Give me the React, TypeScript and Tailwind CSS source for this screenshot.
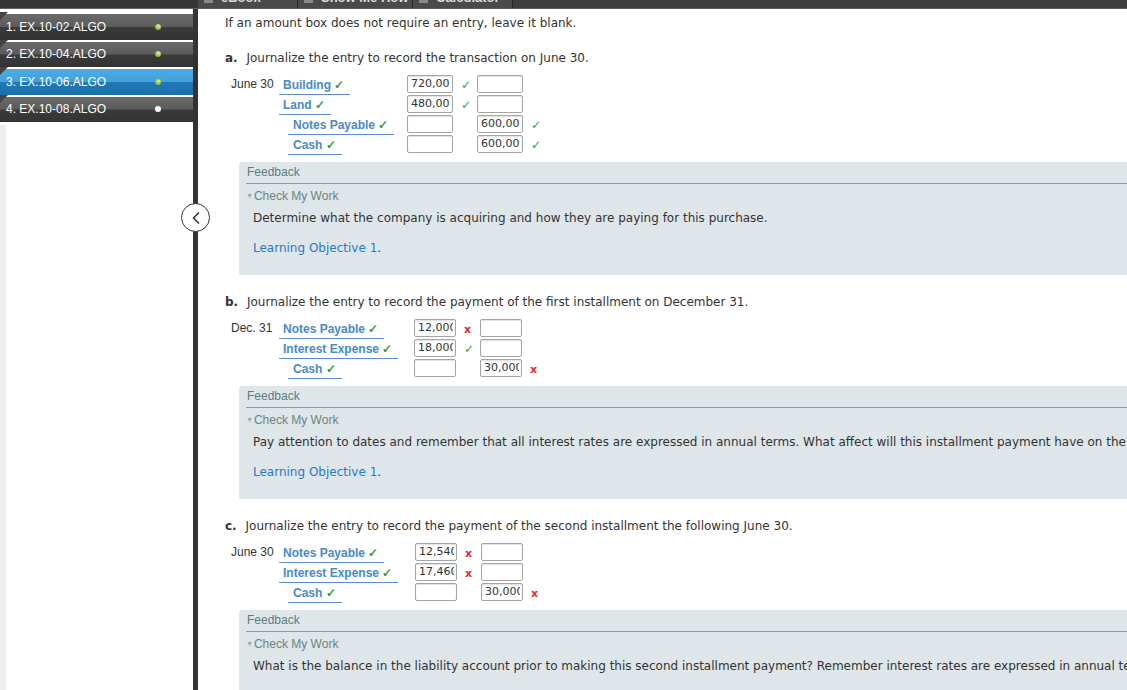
import React from "react";

type Mark = "ok" | "x" | undefined;

type Line = {
  label: string;
  indent?: boolean;
  debit?: string;
  dMark?: Mark;
  credit?: string;
  cMark?: Mark;
};

type Entry = {
  key: string;
  letter: string;
  title: string;
  date: string;
  labelCol: string;
  dWidth: string;
  cWidth: string;
  clip: string;
  lines: Line[];
  hint: string;
};

const ITEMS = [
  { name: "1. EX.10-02.ALGO", dot: "green", active: false },
  { name: "2. EX.10-04.ALGO", dot: "green", active: false },
  { name: "3. EX.10-06.ALGO", dot: "green", active: true },
  { name: "4. EX.10-08.ALGO", dot: "white", active: false },
];

const ENTRIES: Entry[] = [
  {
    key: "a",
    letter: "a.",
    title: "Journalize the entry to record the transaction on June 30.",
    date: "June 30",
    labelCol: "w-[128px]",
    dWidth: "w-[46px]",
    cWidth: "w-[46px]",
    clip: "w-[40px]",
    lines: [
      { label: "Building", debit: "720,00", dMark: "ok" },
      { label: "Land", debit: "480,00", dMark: "ok" },
      { label: "Notes Payable", indent: true, credit: "600,00", cMark: "ok" },
      { label: "Cash", indent: true, credit: "600,00", cMark: "ok" },
    ],
    hint: "Determine what the company is acquiring and how they are paying for this purchase.",
  },
  {
    key: "b",
    letter: "b.",
    title: "Journalize the entry to record the payment of the first installment on December 31.",
    date: "Dec. 31",
    labelCol: "w-[135px]",
    dWidth: "w-[42px]",
    cWidth: "w-[42px]",
    clip: "w-[35px]",
    lines: [
      { label: "Notes Payable", debit: "12,000", dMark: "x" },
      { label: "Interest Expense", debit: "18,000", dMark: "ok" },
      { label: "Cash", indent: true, credit: "30,000", cMark: "x" },
    ],
    hint: "Pay attention to dates and remember that all interest rates are expressed in annual terms. What affect will this installment payment have on the balance?",
  },
  {
    key: "c",
    letter: "c.",
    title: "Journalize the entry to record the payment of the second installment the following June 30.",
    date: "June 30",
    labelCol: "w-[136px]",
    dWidth: "w-[42px]",
    cWidth: "w-[42px]",
    clip: "w-[35px]",
    lines: [
      { label: "Notes Payable", debit: "12,540", dMark: "x" },
      { label: "Interest Expense", debit: "17,460", dMark: "x" },
      { label: "Cash", indent: true, credit: "30,000", cMark: "x" },
    ],
    hint: "What is the balance in the liability account prior to making this second installment payment? Remember interest rates are expressed in annual terms.",
  },
];

function Check({ m }: { m: Mark }) {
  if (m === "ok")
    return <span className="text-[12px] leading-none text-[#3d9a3d]">✓</span>;
  if (m === "x")
    return <span className="text-[11px] font-bold leading-none text-[#e52b2b]">x</span>;
  return null;
}

function AmountBox({ value, width, clip }: { value?: string; width: string; clip: string }) {
  return (
    <div
      className={`${width} h-[18px] shrink-0 rounded-[2px] border border-[#a4a4a4] bg-white pl-[3px] text-[11px] leading-[16px] text-[#333] shadow-[inset_0_1px_1px_rgba(0,0,0,0.12)]`}
    >
      <div className={`${clip} overflow-hidden whitespace-nowrap`}>{value}</div>
    </div>
  );
}

function Journal({ e }: { e: Entry }) {
  return (
    <div className="mt-[9px] flex flex-col gap-[2px]">
      {e.lines.map((l, i) => (
        <div key={l.label} className="flex h-[18px] items-center">
          <div className="w-[54px] shrink-0 pl-[6px] [font-family:'Liberation_Sans',Arial,sans-serif] text-[12px] text-[#333]">
            {i === 0 ? e.date : ""}
          </div>
          <div className={`${e.labelCol} shrink-0`}>
            <span
              className={`inline-block h-[18px] border-b border-[#5b8fc9] pr-[6px] [font-family:'Liberation_Sans',Arial,sans-serif] text-[12px] font-bold leading-[16px] text-[#4a89c8] ${
                l.indent ? "ml-[9px] pl-[5px]" : "pl-[4px]"
              }`}
            >
              {l.label} <Check m="ok" />
            </span>
          </div>
          <AmountBox value={l.debit} width={e.dWidth} clip={e.clip} />
          <div className="ml-[8px] w-[16px] shrink-0">
            <Check m={l.dMark} />
          </div>
          <AmountBox value={l.credit} width={e.cWidth} clip={e.clip} />
          <div className="ml-[8px] w-[16px] shrink-0">
            <Check m={l.cMark} />
          </div>
        </div>
      ))}
    </div>
  );
}

function Feedback({ hint }: { hint: string }) {
  return (
    <div className="ml-[14px] mt-[9px] h-[113px] w-[960px] rounded-[3px] bg-[#dfe6e9] pl-[7px]">
      <div className="border-b border-[#8e9b9d] pb-[4px] pl-[1px] pt-[3px] [font-family:'Liberation_Sans',Arial,sans-serif] text-[12px] leading-[14px] text-[#5d7d7c]">
        Feedback
      </div>
      <div className="mt-[5px] flex items-center [font-family:'Liberation_Sans',Arial,sans-serif] text-[12px] leading-[14px] text-[#688584]">
        <span className="mr-[1px] text-[7px] text-[#9aa6a8]">▼</span>
        Check My Work
      </div>
      <div className="mt-[7px] whitespace-nowrap pl-[7px] text-[12px] leading-[16px] text-[#333]">
        {hint}
      </div>
      <div className="mt-[14px] pl-[7px] text-[12px] leading-[16px] text-[#333]">
        <span className="text-[#2b78c5]">Learning Objective 1</span>.
      </div>
    </div>
  );
}

export default function App() {
  return (
    <div className="relative flex h-[690px] w-[1127px] flex-col overflow-hidden bg-white [font-family:'DejaVu_Sans',Verdana,sans-serif]">
      {/* toolbar, scrolled almost out of view */}
      <div className="flex h-[9px] shrink-0 overflow-hidden border-b border-[#5e5e5e] bg-[#3d3d3d] [font-family:'Liberation_Sans',Arial,sans-serif]">
        <div className="w-[198px] shrink-0 bg-[#353535]" />
        {["eBook", "Show Me How", "Calculator"].map((t, i) => (
          <div
            key={t}
            className={`flex h-[9px] shrink-0 items-start gap-[8px] border-r border-[#262626] bg-[#4a4a4a] pl-[6px] ${
              i === 0 ? "w-[100px]" : i === 1 ? "w-[115px]" : "w-[100px]"
            }`}
          >
            <span className="h-[3px] w-[9px] bg-[#8a8a8a]" />
            <span className="-mt-[9px] text-[13px] font-bold leading-[14px] text-[#dcdcdc]">{t}</span>
          </div>
        ))}
      </div>

      <div className="flex min-h-0 flex-1">
        {/* assignment list */}
        <div className="flex w-[193px] shrink-0 flex-col bg-white pt-[5px]">
          <div className="flex flex-col gap-[2px]">
            {ITEMS.map((it) => (
              <div
                key={it.name}
                className={`relative flex h-[25.5px] items-center pl-[6px] ${
                  it.active
                    ? "bg-[linear-gradient(#4eaae2_0%,#43a2db_48%,#2079b5_52%,#1b71aa_100%)]"
                    : "bg-[linear-gradient(#6a6a6a_0%,#5c5c5c_48%,#3b3b3b_52%,#333333_100%)]"
                }`}
              >
                <span className="absolute -top-[2px] left-0 h-0 w-0 border-l-[4px] border-t-[4px] border-b-[4px] border-r-[4px] border-l-[#444] border-t-[#444] border-b-transparent border-r-transparent" />
                <span className="w-[149px] [font-family:'Liberation_Sans',Arial,sans-serif] text-[12px] text-white">
                  {it.name}
                </span>
                <span
                  className={`h-[6px] w-[6px] rounded-full ${
                    it.dot === "green"
                      ? "bg-[radial-gradient(circle_at_60%_35%,#e6f3c6_0%,#9ccc4e_45%,#6f9d2d_100%)]"
                      : "bg-white"
                  }`}
                />
              </div>
            ))}
          </div>
          <div className="mt-[3px] flex-1 border-l-[6px] border-[#ececec]" />
        </div>

        {/* divider */}
        <div className="w-[5px] shrink-0 bg-[#333]" />

        {/* question content */}
        <div className="min-w-0 flex-1 pl-[27px] pt-[6px] text-[#333]">
          <div className="text-[12px] leading-[16px]">
            If an amount box does not require an entry, leave it blank.
          </div>
          {ENTRIES.map((e) => (
            <div key={e.key}>
              <div className="mt-[19px] whitespace-nowrap text-[12px] leading-[16px]">
                <span className="mr-[5px] font-bold">{e.letter}</span> {e.title}
              </div>
              <Journal e={e} />
              <Feedback hint={e.hint} />
            </div>
          ))}
        </div>
      </div>

      {/* collapse toggle */}
      <button className="absolute left-[181px] top-[203px] flex h-[29px] w-[29px] items-center justify-center rounded-full border-[1.5px] border-[#333] bg-white">
        <svg width="10" height="14" viewBox="0 0 10 14" fill="none">
          <path d="M8 1.5 L2.5 7 L8 12.5" stroke="#333" strokeWidth="1.6" />
        </svg>
      </button>
    </div>
  );
}
